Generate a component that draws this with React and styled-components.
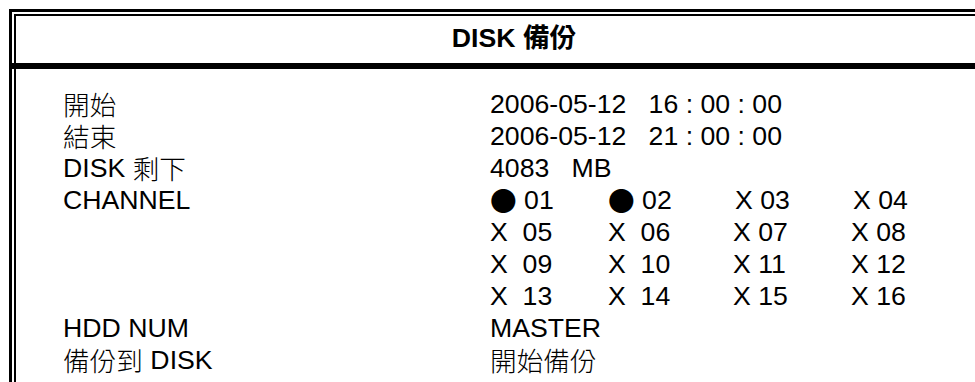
import styled, { createGlobalStyle } from "styled-components";

const GlobalStyle = createGlobalStyle`
  html, body {
    margin: 0;
    padding: 0;
    background: #fff;
    overflow: hidden;
  }
  body {
    font-family: "Liberation Sans", "Noto Sans CJK TC", sans-serif;
    color: #000;
  }
`;

const Page = styled.div`
  padding: 9px 0 0 9px;
  width: 1040px;
  height: 373px;
  overflow: hidden;
`;

const Frame = styled.div`
  box-sizing: border-box;
  width: 1010px;
  border: 3px solid #000;
  border-bottom: none;
`;

const Header = styled.div`
  height: 47px;
  margin: 2px 2px 0;
  border: 2px solid #000;
  border-bottom: none;
  text-align: center;
  font-size: 26.67px;
  line-height: 44px;
  font-weight: 700;
  white-space: pre;
`;

const Divider = styled.div`
  height: 6px;
  background: #000;
`;

const Body = styled.div`
  margin-left: 2px;
  margin-right: 2px;
  border-left: 2px solid #000;
  border-right: 2px solid #000;
  padding: 19px 0 0 47px;
  height: 300px;
  display: grid;
  grid-template-columns: 427px 1fr;
  grid-auto-rows: 32px;
  font-size: 26.67px;
  line-height: 32px;
  white-space: pre;
`;

const Han = styled.span`
  font-family: "Noto Sans CJK TC", sans-serif;
  font-weight: ${(p) => (p.$bold ? 700 : 300)};
  line-height: 1;
  vertical-align: ${(p) => (p.$bold ? "0" : "-2px")};
`;

const Label = styled.div`
  grid-column: 1;
  grid-row: ${(p) => (p.$span ? `span ${p.$span}` : "auto")};
`;

const Value = styled.div`
  grid-column: 2;
`;

const ChannelGrid = styled.div`
  grid-column: 2;
  grid-row: span 4;
  display: grid;
  grid-template-columns: 118px 125px 118px 118px;
  grid-auto-rows: 32px;
`;

const Channel = styled.div`
  padding-left: ${(p) => (p.$shift ? "2px" : "0")};
`;

const Dot = styled.span`
  font-family: "Noto Sans CJK TC", sans-serif;
  font-size: 26.67px;
  line-height: 1;
  vertical-align: -2px;
`;

const channels = [
  { on: true, text: "01" },
  { on: true, text: "02" },
  { text: "X 03", shift: true },
  { text: "X 04", shift: true },
  { text: "X  05" },
  { text: "X  06" },
  { text: "X 07" },
  { text: "X 08" },
  { text: "X  09" },
  { text: "X  10" },
  { text: "X 11" },
  { text: "X 12" },
  { text: "X  13" },
  { text: "X  14" },
  { text: "X 15" },
  { text: "X 16" },
];

export default function App() {
  return (
    <>
      <GlobalStyle />
      <Page>
        <Frame>
          <Header>
            {"DISK "}
            <Han $bold>備份</Han>
          </Header>
          <Divider />
          <Body>
            <Label>
              <Han>開始</Han>
            </Label>
            <Value>2006-05-12   16 : 00 : 00</Value>
            <Label>
              <Han>結束</Han>
            </Label>
            <Value>2006-05-12   21 : 00 : 00</Value>
            <Label>
              {"DISK "}
              <Han>剩下</Han>
            </Label>
            <Value>4083   MB</Value>
            <Label $span={4}>CHANNEL</Label>
            <ChannelGrid>
              {channels.map((c, i) => (
                <Channel key={i} $shift={c.shift}>
                  {c.on ? (
                    <>
                      <Dot>●</Dot> {c.text}
                    </>
                  ) : (
                    c.text
                  )}
                </Channel>
              ))}
            </ChannelGrid>
            <Label>HDD NUM</Label>
            <Value>MASTER</Value>
            <Label>
              <Han>備份到</Han>
              {" DISK"}
            </Label>
            <Value>
              <Han>開始備份</Han>
            </Value>
          </Body>
        </Frame>
      </Page>
    </>
  );
}
